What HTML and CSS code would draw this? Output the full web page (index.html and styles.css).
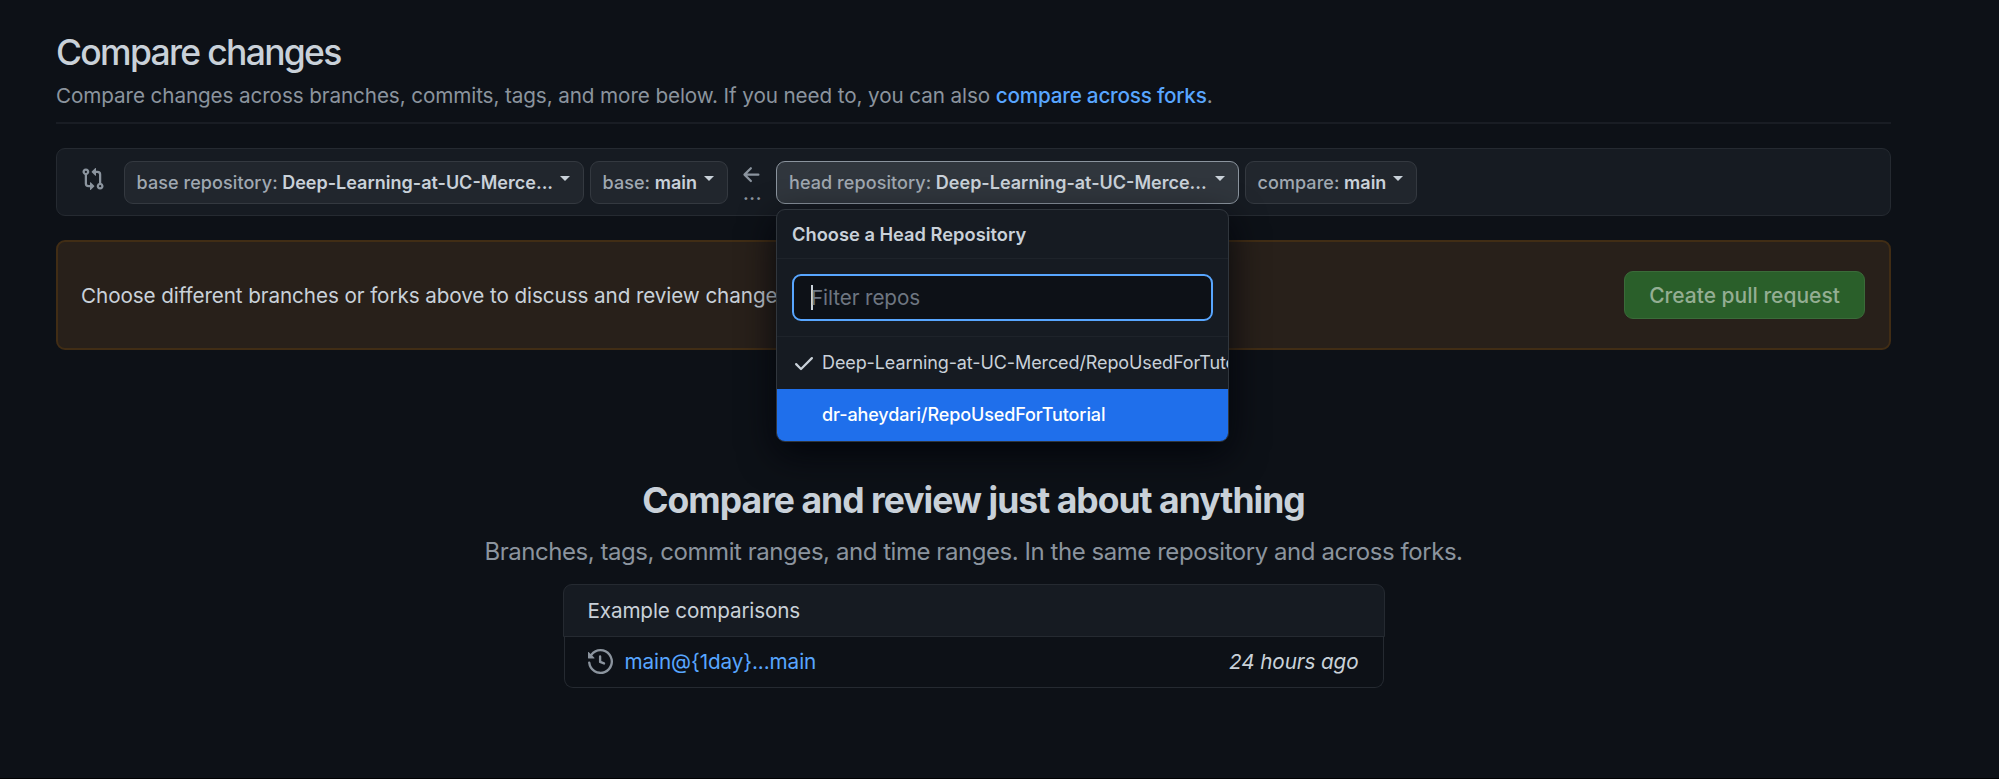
FILE: index.html
```
<!DOCTYPE html>
<html lang="en">
<head>
<meta charset="utf-8">
<title>Compare changes</title>
<link rel="stylesheet" href="styles.css">
</head>
<body>
<main class="page">
  <header class="head">
    <h1 class="title">Compare changes</h1>
    <p class="lead">Compare changes across branches, commits, tags, and more below. If you need to, you can also <a class="link" href="#">compare across forks</a>.</p>
  </header>

  <section class="range">
    <svg class="compare-icon" viewBox="0 0 16 16" fill="currentColor"><path fill-rule="evenodd" d="M9.573.677L7.177 3.073a.25.25 0 000 .354l2.396 2.396A.25.25 0 0010 5.646V4h1a1 1 0 011 1v5.628a2.251 2.251 0 101.5 0V5A2.5 2.5 0 0011 2.5h-1V.854a.25.25 0 00-.427-.177zM6 12v-1.646a.25.25 0 01.427-.177l2.396 2.396a.25.25 0 010 .354l-2.396 2.396A.25.25 0 016 15.146V13.5H5A2.5 2.5 0 012.5 11V5.372a2.25 2.25 0 111.5 0V11a1 1 0 001 1h1zm6.75 0a.75.75 0 100 1.5.75.75 0 000-1.5zM4 3.25a.75.75 0 11-1.5 0 .75.75 0 011.5 0z"/></svg>
    <button class="select"><span><span class="key">base repository:</span> Deep-Learning-at-UC-Merce...</span><span class="caret"></span></button>
    <button class="select select-base"><span><span class="key">base:</span> main</span><span class="caret"></span></button>
    <div class="arrow">
      <svg class="arrow-icon" viewBox="0 0 16 16" fill="currentColor"><path fill-rule="evenodd" d="M7.78 12.53a.75.75 0 01-1.06 0L2.47 8.28a.75.75 0 010-1.06l4.25-4.25a.75.75 0 011.06 1.06L4.81 7h7.44a.75.75 0 010 1.5H4.81l2.97 2.97a.75.75 0 010 1.06z"/></svg>
      <span class="dots">...</span>
    </div>
    <div class="anchor">
      <button class="select select-open"><span><span class="key">head repository:</span> Deep-Learning-at-UC-Merce...</span><span class="caret"></span></button>
      <div class="menu">
        <div class="menu-title">Choose a Head Repository</div>
        <div class="menu-filter"><div class="field"><span class="cursor"></span>Filter repos</div></div>
        <div class="item"><svg class="check" viewBox="0 0 16 16" fill="currentColor"><path fill-rule="evenodd" d="M13.78 4.22a.75.75 0 010 1.06l-7.25 7.25a.75.75 0 01-1.06 0L2.22 9.28a.75.75 0 011.06-1.06L6 10.94l6.72-6.72a.75.75 0 011.06 0z"/></svg>Deep-Learning-at-UC-Merced/RepoUsedForTutorial</div>
        <div class="item item-active"><span class="check"></span>dr-aheydari/RepoUsedForTutorial</div>
      </div>
    </div>
    <button class="select select-compare"><span><span class="key">compare:</span> main</span><span class="caret"></span></button>
  </section>

  <section class="notice">
    <p class="notice-text">Choose different branches or forks above to discuss and review changes.</p>
    <button class="create">Create pull request</button>
  </section>

  <section class="blank">
    <h2 class="blank-title">Compare and review just about anything</h2>
    <p class="blank-text">Branches, tags, commit ranges, and time ranges. In the same repository and across forks.</p>
    <div class="examples">
      <div class="examples-head">Example comparisons</div>
      <div class="examples-row">
        <svg class="clock" viewBox="0 0 16 16" fill="currentColor"><path fill-rule="evenodd" d="M1.643 3.143L.427 1.927A.25.25 0 000 2.104V5.75c0 .138.112.25.25.25h3.646a.25.25 0 00.177-.427L2.715 4.215a6.5 6.5 0 11-1.18 4.458.75.75 0 10-1.493.154 8.001 8.001 0 101.6-5.684zM7.75 4a.75.75 0 01.75.75v2.992l2.028.812a.75.75 0 01-.557 1.392l-2.5-1A.75.75 0 017 8.25v-3.5A.75.75 0 017.75 4z"/></svg>
        <a class="link" href="#">main@{1day}...main</a>
        <em class="ago">24 hours ago</em>
      </div>
    </div>
  </section>
</main>
</body>
</html>
```
FILE: styles.css
```
* { box-sizing: border-box; }
body {
  margin: 0;
  height: 779px;
  overflow: hidden;
  background: #0d1117;
  color: #c9d1d9;
  font-family: Inter, "Liberation Sans", sans-serif;
  font-size: 20.7px;
  border-bottom: 1px solid #010203;
}
h1, h2, p { margin: 0; font-weight: 400; }
button { font: inherit; color: inherit; letter-spacing: inherit; }
svg { display: block; flex: none; }
.link { color: #58a6ff; text-decoration: none; }
.page { padding: 30px 108px 0 56px; }

.head { height: 94px; border-bottom: 2px solid #191d24; }
.title { font-size: 35.5px; line-height: 46px; font-weight: 500; letter-spacing: -1.7px; }
.lead { margin-top: 3px; line-height: 33px; letter-spacing: -0.11px; color: #8b949e; }
.lead .link { font-weight: 500; letter-spacing: -0.22px; }

.range {
  display: flex;
  height: 68px;
  margin-top: 24px;
  padding: 12px 24px;
  background: #161b22;
  border: 1px solid #252a31;
  border-radius: 9px;
}
.compare-icon { width: 24px; height: 24px; margin: 6px 18.5px 0 0; color: #8b949e; }
.select {
  display: flex;
  flex: none;
  align-items: center;
  justify-content: space-between;
  width: 460.5px;
  height: 43px;
  margin-right: 5.5px;
  padding: 0 13px 1px 12px;
  background: #21262d;
  border: 1px solid #343940;
  border-radius: 9px;
  font-size: 18px;
  font-weight: 600;
  white-space: nowrap;
}
.select-base { width: 138.5px; margin-right: 0; }
.select-compare { width: 172.5px; }
.key { font-weight: 500; letter-spacing: 0.08px; color: #a0a8b1; }
.caret { margin-top: -7px; border: 5.5px solid transparent; border-top-color: #c9d1d9; border-bottom: 0; }
.select-open { width: 463px; background: #30363d; border-color: #8b949e; }
.arrow { flex: none; width: 48px; padding: 2px 0 0 12px; color: #8b949e; }
.arrow-icon { width: 24px; height: 24px; }
.dots { display: block; padding-left: 3px; font-size: 18px; line-height: 13px; font-weight: 600; letter-spacing: 0.6px; }

.anchor { position: relative; flex: none; }
.menu {
  position: absolute;
  z-index: 2;
  left: 0;
  top: 48px;
  width: 453px;
  overflow: hidden;
  background: #161b22;
  border: 1px solid #30363d;
  border-radius: 9px;
  box-shadow: 0 12px 36px rgba(1, 4, 9, 0.85);
  font-size: 18px;
  white-space: nowrap;
}
.menu-title { height: 48px; padding-left: 15px; line-height: 49px; font-size: 18.3px; font-weight: 600; }
.menu-filter { height: 79px; padding: 15px 15px 15px 15px; border: solid #1e232a; border-width: 1px 0; }
.field {
  display: flex;
  align-items: center;
  height: 47px;
  padding-left: 17px;
  font-size: 20.7px;
  letter-spacing: -0.1px;
  color: #6e7681;
  background: #0d1117;
  border: 2px solid #58a6ff;
  border-radius: 9px;
}
.cursor { width: 2px; height: 25px; margin-right: -2px; background: #c9d1d9; }
.item { display: flex; align-items: center; height: 52px; padding: 0 0 1px 15px; letter-spacing: -0.1px; }
.check { flex: none; width: 24px; height: 24px; margin-right: 6px; }
.item-active { background: #1f6feb; color: #fff; font-weight: 500; letter-spacing: -0.11px; }

.notice {
  display: flex;
  align-items: center;
  justify-content: space-between;
  height: 110px;
  margin-top: 24px;
  padding: 0 24px 0 23px;
  background: #28201a;
  border: 2px solid #412d15;
  border-radius: 9px;
}
.notice-text { letter-spacing: -0.1px; }
.create {
  width: 241px;
  height: 48px;
  padding: 0;
  background: #2a5f2a;
  border: 1px solid #3a6b39;
  border-radius: 9px;
  font-size: 21px;
  font-weight: 500;
  color: #94ae93;
}

.blank { padding-top: 124px; text-align: center; }
.blank-title { font-size: 35.5px; line-height: 54px; font-weight: 650; letter-spacing: -0.97px; }
.blank-text { margin-top: 6px; font-size: 24px; line-height: 36px; letter-spacing: -0.45px; color: #8b949e; }
.examples { width: 822px; margin: 14px auto 0; padding-right: 0; text-align: left; }
.examples-head {
  height: 53px;
  padding-left: 24px;
  line-height: 51px;
  letter-spacing: -0.15px;
  background: #161b22;
  border: 1px solid #252a31;
  border-radius: 9px 9px 0 0;
}
.examples-row {
  display: flex;
  align-items: center;
  height: 51px;
  margin: 0 1px;
  padding: 0 24px 2px 23px;
  border: 1px solid #252a31;
  border-top: 0;
  border-radius: 0 0 9px 9px;
  letter-spacing: -0.1px;
}
.clock { width: 25px; height: 25px; margin-right: 12px; color: #8b949e; }
.ago { margin-left: auto; }
```
